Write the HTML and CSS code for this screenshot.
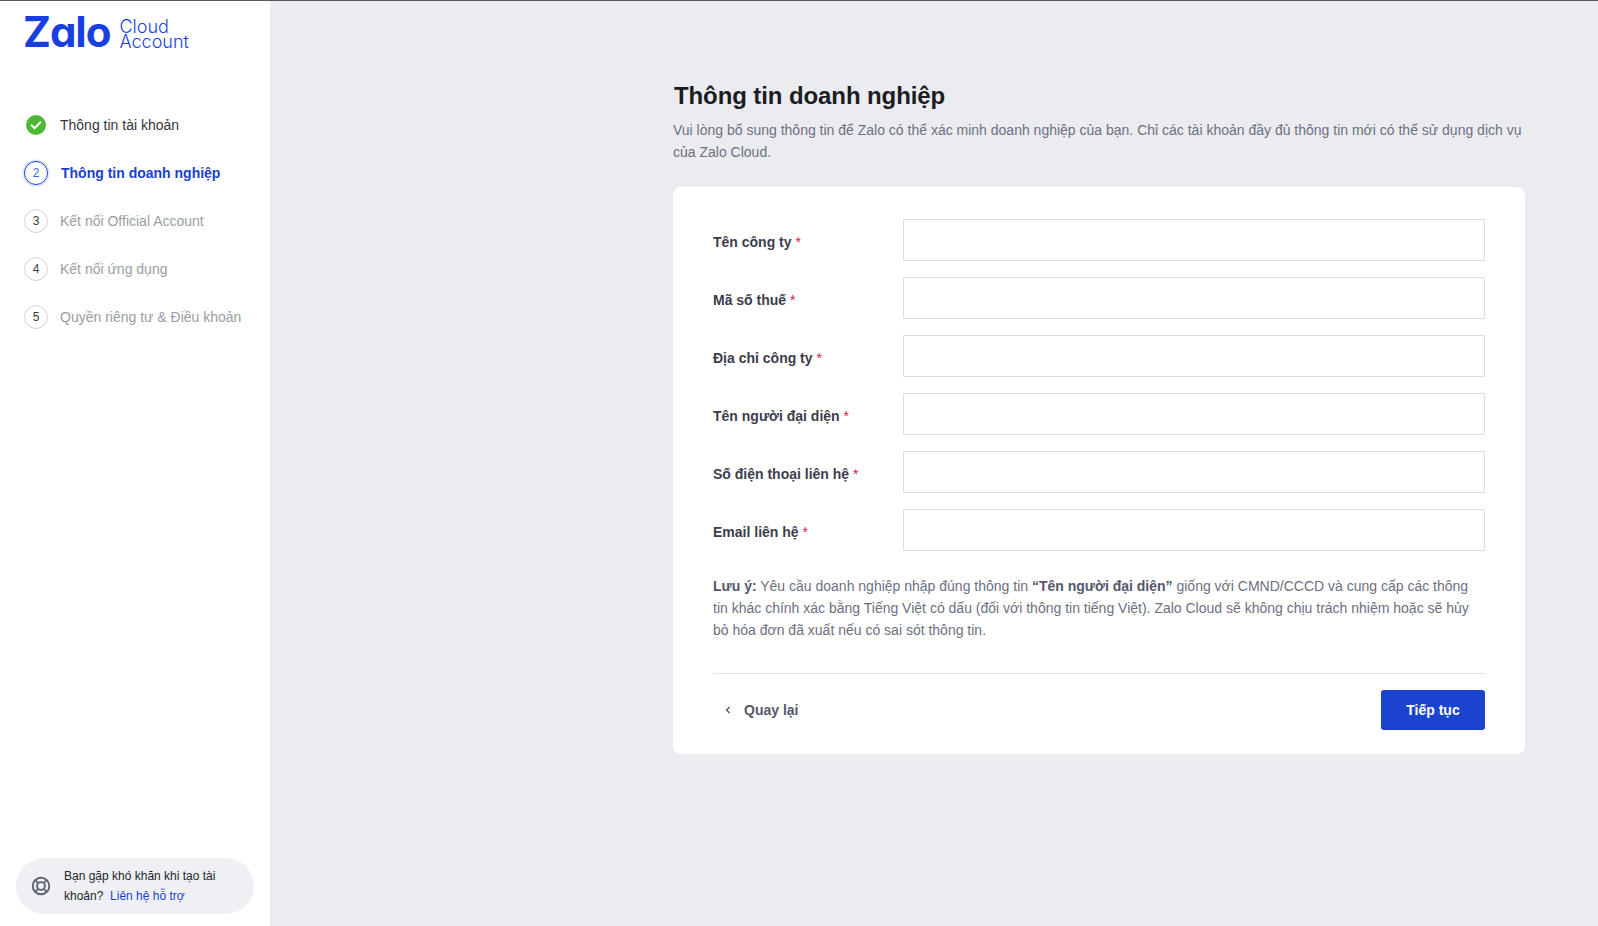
FILE: index.html
```html
<!DOCTYPE html>
<html lang="vi">
<head>
<meta charset="utf-8">
<title>Zalo Cloud Account</title>
<link rel="stylesheet" href="styles.css">
</head>
<body>
<div class="app">
  <aside class="sidebar">
    <div class="logo">
      <span class="logo-zalo">Zalo</span>
      <span class="logo-sub">Cloud<br>Account</span>
    </div>
    <ol class="steps">
      <li class="step step-done">
        <svg class="step-check" viewBox="0 0 20 20" width="20" height="20"><circle cx="10" cy="10" r="10" fill="#4cb833"/><path d="M5.6 10.3l3 3 5.8-6" fill="none" stroke="#fff" stroke-width="2" stroke-linecap="round" stroke-linejoin="round"/></svg>
        <span>Thông tin tài khoản</span>
      </li>
      <li class="step step-active"><span class="step-num">2</span><span>Thông tin doanh nghiệp</span></li>
      <li class="step"><span class="step-num">3</span><span>Kết nối Official Account</span></li>
      <li class="step"><span class="step-num">4</span><span>Kết nối ứng dụng</span></li>
      <li class="step"><span class="step-num">5</span><span>Quyền riêng tư &amp; Điều khoản</span></li>
    </ol>
    <div class="help">
      <svg class="help-icon" viewBox="0 0 20 20" width="20" height="20" fill="none" stroke="#5f6470" stroke-width="1.9"><circle cx="10" cy="10" r="8.3"/><circle cx="10" cy="10" r="3.9"/><path d="M4.2 4.2l3 3M15.8 4.2l-3 3M4.2 15.8l3-3M15.8 15.8l-3-3"/></svg>
      <p class="help-text">Bạn gặp khó khăn khi tạo tài khoản?&nbsp; <a class="help-link" href="#">Liên hệ hỗ trợ</a></p>
    </div>
  </aside>
  <main class="main">
    <div class="content">
      <h1 class="title">Thông tin doanh nghiệp</h1>
      <p class="desc">Vui lòng bổ sung thông tin để Zalo có thể xác minh doanh nghiệp của bạn. Chỉ các tài khoản đầy đủ thông tin mới có thể sử dụng dịch vụ của Zalo Cloud.</p>
      <form class="card">
        <div class="fields">
          <div class="field"><label class="label">Tên công ty <em>*</em></label><input class="input" type="text"></div>
          <div class="field"><label class="label">Mã số thuế <em>*</em></label><input class="input" type="text"></div>
          <div class="field"><label class="label">Địa chỉ công ty <em>*</em></label><input class="input" type="text"></div>
          <div class="field"><label class="label">Tên người đại diện <em>*</em></label><input class="input" type="text"></div>
          <div class="field"><label class="label">Số điện thoại liên hệ <em>*</em></label><input class="input" type="text"></div>
          <div class="field"><label class="label">Email liên hệ <em>*</em></label><input class="input" type="text"></div>
        </div>
        <p class="note"><strong>Lưu ý:</strong> Yêu cầu doanh nghiệp nhập đúng thông tin <strong>“Tên người đại diện”</strong> giống với CMND/CCCD và cung cấp các thông tin khác chính xác bằng Tiếng Việt có dấu (đối với thông tin tiếng Việt). Zalo Cloud sẽ không chịu trách nhiệm hoặc sẽ hủy bỏ hóa đơn đã xuất nếu có sai sót thông tin.</p>
        <div class="actions">
          <a class="back" href="#">
            <svg viewBox="0 0 8 10" width="8" height="10" fill="none" stroke="#55586a" stroke-width="1.4"><path d="M5.6 2L2.6 5l3 3"/></svg>
            <span>Quay lại</span>
          </a>
          <button class="next" type="button">Tiếp tục</button>
        </div>
      </form>
    </div>
  </main>
</div>
</body>
</html>
```
FILE: styles.css
```css
* { box-sizing: border-box; }
html, body { margin: 0; height: 100%; }
body {
  font-family: "Liberation Sans", Arial, sans-serif;
  font-size: 14px;
  background: #ebecf0;
  border-top: 1px solid #5a5a5a;
  overflow: hidden;
}
.app { display: flex; height: 925px; }
.sidebar {
  width: 270px;
  flex: none;
  background: #fff;
  display: flex;
  flex-direction: column;
  padding: 0 16px 12px 16px;
}
.logo {
  display: flex;
  align-items: flex-end;
  gap: 9px;
  color: #1a3fe0;
  padding: 8px 0 0 7px;
  height: 52px;
  font-feature-settings: "cv11" 1;
}
.logo-zalo {
  font-family: Inter, sans-serif;
  font-weight: 700;
  font-size: 42px;
  line-height: 42px;
  letter-spacing: -1px;
}
.logo-sub {
  font-family: Inter, sans-serif;
  font-weight: 300;
  font-size: 18px;
  line-height: 15px;
  padding-bottom: 4px;
}
.steps {
  list-style: none;
  margin: 60px 0 0;
  padding: 0 0 0 8px;
  display: flex;
  flex-direction: column;
  gap: 24px;
  flex: 1;
}
.step {
  display: flex;
  align-items: center;
  height: 24px;
  color: #9a9da6;
  font-size: 14px;
  gap: 12px;
}
.step-check { margin: 0 2px; flex: none; }
.step-done { color: #34363d; gap: 12px; }
.step-num {
  width: 24px;
  height: 24px;
  flex: none;
  border: 1px solid #cfd2d8;
  border-radius: 50%;
  display: flex;
  align-items: center;
  justify-content: center;
  font-size: 12px;
  color: #3a3c44;
}
.step-active { color: #1a3fd0; font-weight: 700; gap: 13px; }
.step-active .step-num {
  border-color: #1a3fe0;
  color: #4a5fd0;
  font-weight: 400;
  box-shadow: 0 0 3px #8fa2f0;
}
.help {
  height: 56px;
  width: 238px;
  background: #eef0f4;
  border-radius: 28px;
  display: flex;
  align-items: center;
  gap: 13px;
  padding: 0 15px;
}
.help-icon { flex: none; }
.help-text {
  margin: 0;
  font-size: 12px;
  line-height: 20px;
  color: #23252b;
}
.help-link { color: #1a3fd0; text-decoration: none; }
.main {
  flex: 1;
  display: flex;
  justify-content: flex-end;
  padding: 79px 73px 0 0;
}
.content { width: 852px; }
.title {
  margin: 0;
  font-size: 24px;
  line-height: 32px;
  font-weight: 700;
  color: #1c1d22;
  letter-spacing: -0.1px;
  padding-left: 1px;
}
.desc {
  margin: 7px 0 0;
  font-size: 14px;
  line-height: 22px;
  color: #6d7080;
}
.card {
  margin-top: 24px;
  background: #fff;
  border-radius: 8px;
  padding: 32px 40px 24px;
}
.fields { display: flex; flex-direction: column; gap: 16px; }
.field { display: flex; align-items: center; height: 42px; }
.label {
  width: 190px;
  flex: none;
  font-weight: 700;
  font-size: 14px;
  color: #3c3d4c;
  padding-top: 3px;
}
.label em { color: #e5173f; font-style: normal; font-weight: 400; }
.input {
  flex: 1;
  height: 42px;
  border: 1px solid #dcdde0;
  border-radius: 1px;
  background: #fff;
  outline: none;
}
.note {
  margin: 24px 0 0;
  font-size: 14px;
  line-height: 22px;
  color: #6d7080;
}
.note strong { color: #55586a; }
.actions {
  margin-top: 32px;
  border-top: 1px solid #e1e2e5;
  padding-top: 16px;
  display: flex;
  justify-content: space-between;
  align-items: center;
}
.back {
  display: flex;
  align-items: center;
  gap: 12px;
  padding-left: 11px;
  color: #55586a;
  font-weight: 700;
  text-decoration: none;
}
.next {
  width: 104px;
  height: 40px;
  border: none;
  border-radius: 3px;
  background: #1a43d0;
  color: #fff;
  font-family: inherit;
  font-size: 14px;
  font-weight: 700;
}
```
